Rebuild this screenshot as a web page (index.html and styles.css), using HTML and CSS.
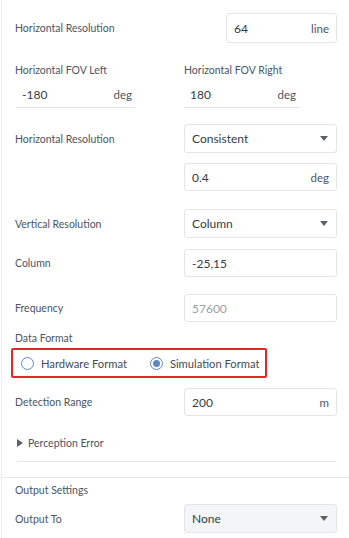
FILE: index.html
```html
<!DOCTYPE html>
<html lang="en">
<head>
<meta charset="UTF-8">
<meta name="viewport" content="width=device-width, initial-scale=1.0">
<title>Sensor Settings</title>
<link rel="stylesheet" href="styles.css">
</head>
<body>
<div class="panel">
  <div class="section">
    <!-- horizontal resolution -->
    <div class="row row-first">
      <span class="label">Horizontal Resolution</span>
      <div class="field field-short">
        <span class="value">64</span>
        <span class="unit">line</span>
      </div>
    </div>

    <!-- field of view -->
    <div class="fov">
      <div class="fov-col">
        <span class="label">Horizontal FOV Left</span>
        <div class="line-field line-left">
          <span class="value">-180</span>
          <span class="unit">deg</span>
        </div>
      </div>
      <div class="fov-col fov-right">
        <span class="label">Horizontal FOV Right</span>
        <div class="line-field line-right">
          <span class="value">180</span>
          <span class="unit">deg</span>
        </div>
      </div>
    </div>

    <div class="row gap-16">
      <span class="label">Horizontal Resolution</span>
      <div class="field select">
        <span class="value">Consistent</span>
        <span class="caret"></span>
      </div>
    </div>
    <div class="row gap-10">
      <span class="label"></span>
      <div class="field">
        <span class="value">0.4</span>
        <span class="unit">deg</span>
      </div>
    </div>

    <div class="row gap-18">
      <span class="label">Vertical Resolution</span>
      <div class="field select">
        <span class="value">Column</span>
        <span class="caret"></span>
      </div>
    </div>
    <div class="row gap-11">
      <span class="label">Column</span>
      <div class="field">
        <span class="value">-25,15</span>
      </div>
    </div>

    <div class="row gap-17">
      <span class="label">Frequency</span>
      <div class="field field-disabled">
        <span class="value">57600</span>
      </div>
    </div>

    <div class="plain-label data-label">Data Format</div>
    <div class="radio-group">
      <label class="radio">
        <span class="radio-dot"></span>
        <span>Hardware Format</span>
      </label>
      <label class="radio radio-checked">
        <span class="radio-dot"></span>
        <span>Simulation Format</span>
      </label>
    </div>

    <div class="row gap-10">
      <span class="label">Detection Range</span>
      <div class="field">
        <span class="value">200</span>
        <span class="unit">m</span>
      </div>
    </div>

    <div class="collapse">
      <span class="arrow"></span>
      <span>Perception Error</span>
    </div>
    <div class="divider"></div>
  </div>

  <div class="output">
    <div class="plain-label output-label">Output Settings</div>
    <div class="row gap-7">
      <span class="label">Output To</span>
      <div class="field select field-gray">
        <span class="value">None</span>
        <span class="caret"></span>
      </div>
    </div>
  </div>
</div>
</body>
</html>
```
FILE: styles.css
```css
body {
    margin: 0;
    background: #fff;
    font-family: Lato, "Open Sans", sans-serif;
    color: #4b5563;
}
.panel {
    border-left: 1px solid #eceef1;
    margin-left: 1px;
    height: 538px;
    box-sizing: border-box;
}
.section {
    padding: 13px 12px 15px 13px;
    border-bottom: 1px solid #e6e8eb;
}
.row {
    display: flex;
    align-items: center;
}
.label, .plain-label {
    flex: 1;
    font-size: 10.5px;
    color: #4b5563;
}
.field {
    width: 153px;
    height: 28px;
    box-sizing: border-box;
    border: 1px solid #e3e5e8;
    border-radius: 3px;
    display: flex;
    align-items: center;
    justify-content: space-between;
    padding: 0 7px;
    background: #fff;
}
.field-short {
    width: 111px;
    height: 30px;
}
.select {
    height: 29px;
}
.value {
    font-size: 12px;
    color: #363c45;
}
.unit {
    font-size: 11.5px;
    color: #4b5563;
}
.caret {
    width: 0;
    height: 0;
    border-left: 4.5px solid transparent;
    border-right: 4.5px solid transparent;
    border-top: 5px solid #5b616b;
    margin-right: 1px;
}
.field-disabled .value {
    color: #9aa0a7;
}
.field-gray {
    background: #f4f5f6;
}
.gap-7 { margin-top: 7px; }
.gap-10 { margin-top: 10px; }
.gap-11 { margin-top: 11px; }
.gap-16 { margin-top: 16px; }
.gap-17 { margin-top: 17px; }
.gap-18 { margin-top: 18px; }

.fov {
    display: flex;
    margin-top: 21px;
}
.fov-col {
    display: flex;
    flex-direction: column;
    flex: 1;
}
.fov-right {
    flex: none;
    width: 153px;
}
.fov-col .label {
    line-height: 12px;
}
.line-field {
    display: flex;
    align-items: center;
    justify-content: space-between;
    height: 27px;
    box-sizing: border-box;
    margin-top: 5px;
    padding: 0 3px 0 6px;
    border-bottom: 1px solid #e3e5e8;
}
.line-left {
    width: 119px;
    margin-left: 1px;
}
.line-right {
    width: 115px;
}

.data-label {
    line-height: 14px;
    margin-top: 9px;
}
.radio-group {
    display: flex;
    align-items: center;
    gap: 23px;
    width: 256px;
    height: 30px;
    box-sizing: border-box;
    margin: 3px 0 0 -4px;
    padding-left: 8px;
    border: 2px solid #e3262b;
    border-radius: 2px;
}
.radio {
    display: flex;
    align-items: center;
    gap: 7px;
    font-size: 11.2px;
    color: #444c57;
}
.radio-dot {
    width: 11px;
    height: 11px;
    border: 1.5px solid #5f86c4;
    border-radius: 50%;
    display: flex;
    align-items: center;
    justify-content: center;
}
.radio-checked .radio-dot::after {
    content: "";
    width: 7px;
    height: 7px;
    border-radius: 50%;
    background: #5f86c4;
}

.collapse {
    display: flex;
    align-items: center;
    gap: 5px;
    margin-top: 20px;
    line-height: 14px;
    font-size: 10.5px;
    color: #4b5563;
}
.arrow {
    width: 0;
    height: 0;
    border-top: 4px solid transparent;
    border-bottom: 4px solid transparent;
    border-left: 6px solid #5b616b;
    margin-left: 2px;
}
.divider {
    height: 1px;
    background: #e6e8eb;
    margin: 11px 1px 0 2px;
}

.output {
    padding: 5px 12px 0 13px;
}
.output-label {
    line-height: 14px;
}
```
